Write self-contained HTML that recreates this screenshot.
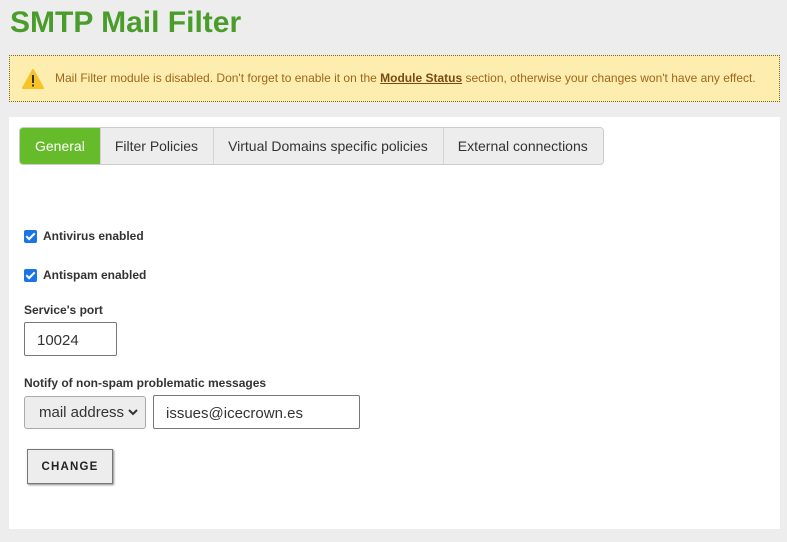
<!DOCTYPE html>
<html><head><style>
*{box-sizing:border-box}
body{margin:0;background:#ededed;font-family:"Liberation Sans",sans-serif;width:787px;height:542px;position:relative;overflow:hidden;color:#222}
h1{position:absolute;left:10px;top:6px;margin:0;font-size:30px;color:#4a9c2b;font-weight:bold}
.warn{position:absolute;left:9px;top:55px;width:771px;height:47px;background:#fdeeb0;border:1px dotted #7a6a2a;font-size:12px;color:#a0661a;line-height:45px;padding-left:45px}
.warn b{text-decoration:underline;color:#7a4a10}
.warn svg{position:absolute;left:12px;top:13px}
.main{position:absolute;left:9px;top:117px;width:771px;height:412px;background:#fff}
.tabs{position:absolute;left:10px;top:10px;height:38px;display:flex;border:1px solid #ccc;border-radius:4px;overflow:hidden}
.tab{background:#ededed;font-size:14px;line-height:36px;padding:0 15px 0 14px;border-left:1px solid #d4d4d4;color:#333}
.tab.on{background:#66bb2a;color:#fff;border-left:0;padding:0 15px}
.cb{position:absolute;left:15px;font-size:12px;font-weight:bold;color:#333;display:flex;align-items:center}
.cb i{display:inline-block;width:13px;height:13px;background:#1a73e8;border-radius:2px;margin-right:6px;position:relative}
.cb i:after{content:"";position:absolute;left:4px;top:1px;width:3px;height:7px;border:solid #fff;border-width:0 2px 2px 0;transform:rotate(45deg)}
.lbl{position:absolute;left:15px;font-size:12px;font-weight:bold;color:#333}
.inp{position:absolute;border:1px solid #777;border-radius:2px;font-size:15px;line-height:35px;padding-left:12px;background:#fff;color:#333}
.sel{position:absolute;left:15px;top:279px;width:122px;height:33px;border:1px solid #aaa;border-radius:3px;background:#ededed;font-size:15px;line-height:31px;padding-left:14px;color:#333}
.btn{position:absolute;left:18px;top:332px;width:86px;height:35px;border:1px solid #777;background:#ededed;box-shadow:1px 1px 2px #888;font-size:11.5px;font-weight:bold;letter-spacing:1.2px;text-align:center;line-height:35px}
</style></head><body>
<h1>SMTP Mail Filter</h1>
<div class="warn"><svg width="22" height="20" viewBox="0 0 22 20"><path d="M11 1 L21 19 L1 19 Z" fill="#f7c325" stroke="#f7c325" stroke-linejoin="round" stroke-width="2"/><rect x="10" y="6" width="2" height="8" fill="#333"/><rect x="10" y="15.5" width="2" height="2" fill="#333"/></svg>Mail Filter module is disabled. Don't forget to enable it on the <b>Module Status</b> section, otherwise your changes won't have any effect.</div>
<div class="main">
<div class="tabs"><div class="tab on">General</div><div class="tab">Filter Policies</div><div class="tab">Virtual Domains specific policies</div><div class="tab">External connections</div></div>
<div class="cb" style="top:112px"><i></i>Antivirus enabled</div>
<div class="cb" style="top:151px"><i></i>Antispam enabled</div>
<div class="lbl" style="top:186px">Service's port</div>
<div class="inp" style="left:15px;top:205px;width:93px;height:34px">10024</div>
<div class="lbl" style="top:259px">Notify of non-spam problematic messages</div>
<div class="sel">mail address<svg style="position:absolute;right:7px;top:12px" width="10" height="7" viewBox="0 0 10 7"><path d="M1 1 L5 5 L9 1" fill="none" stroke="#333" stroke-width="2"/></svg></div>
<div class="inp" style="left:144px;top:278px;width:207px;height:34px">issues@icecrown.es</div>
<div class="btn">CHANGE</div>
</div>
</body></html>
